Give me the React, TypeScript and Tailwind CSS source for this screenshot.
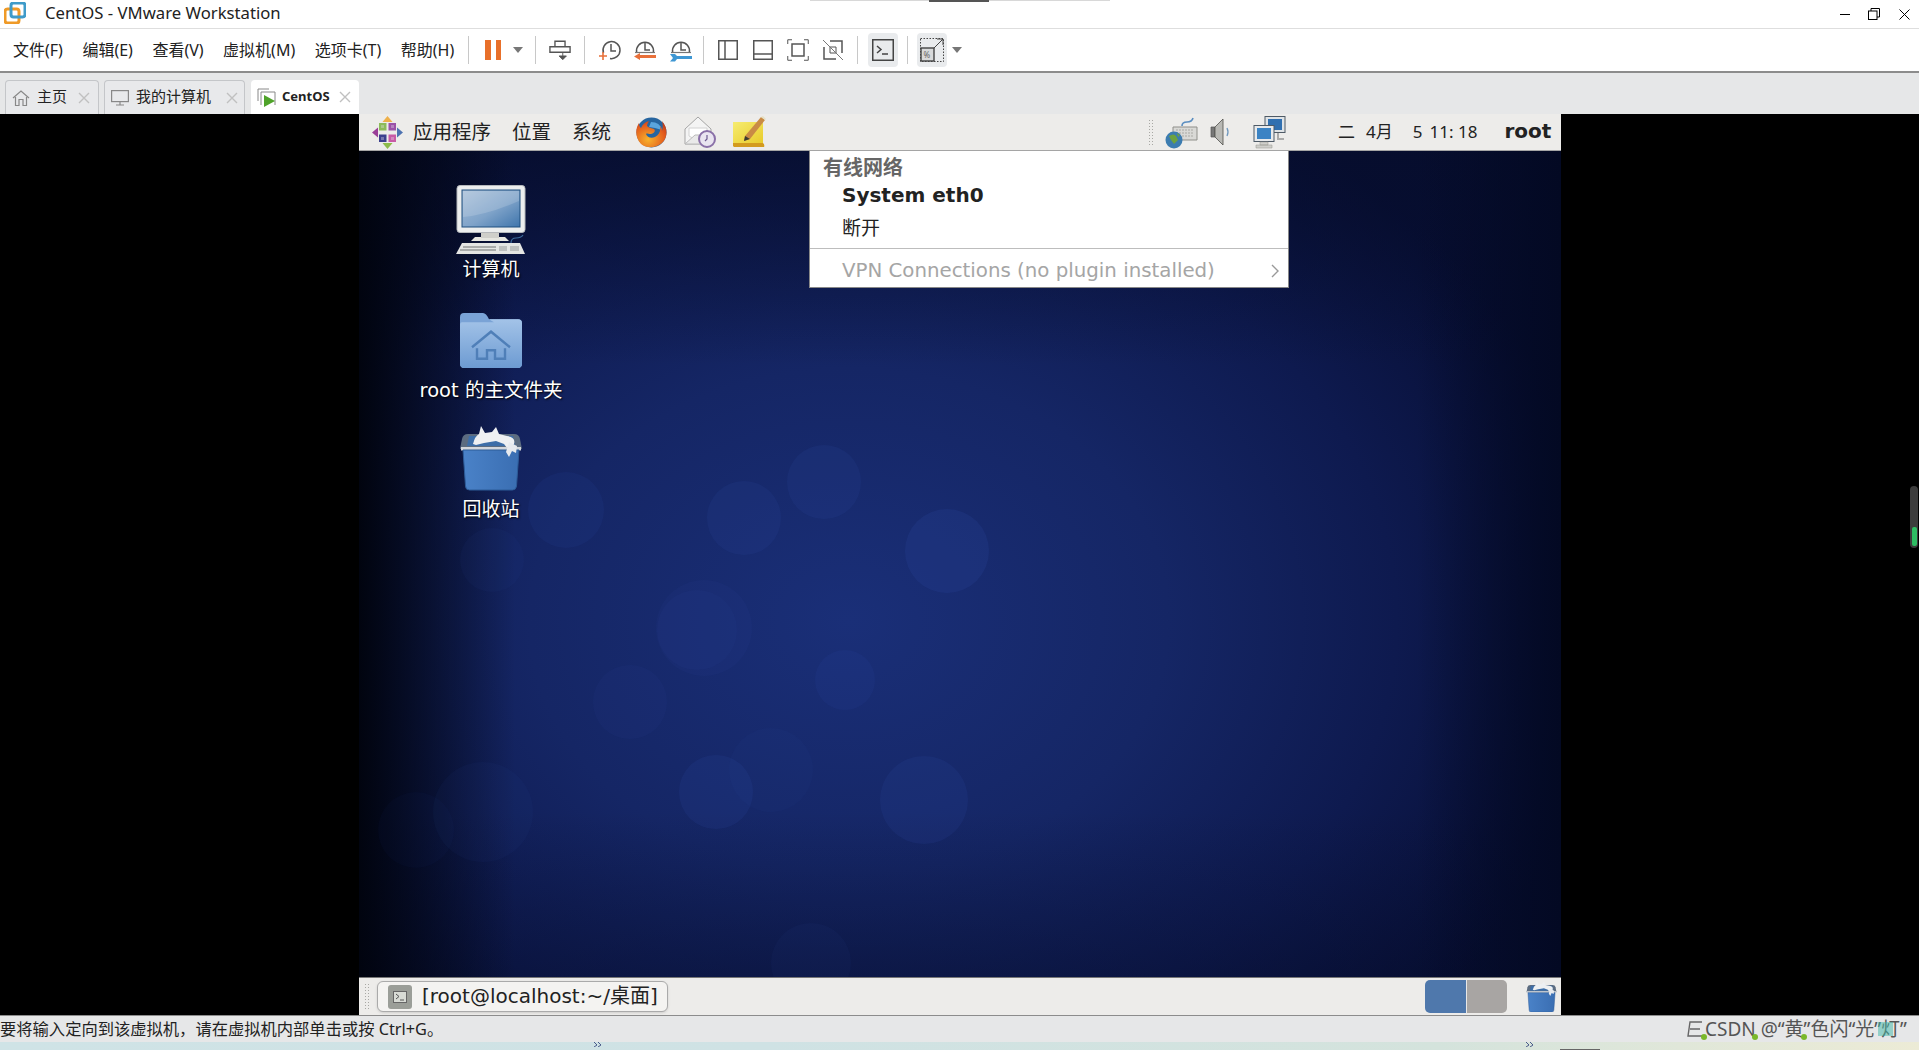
import React from "react";

const cjk = "font-['Noto_Sans','Noto_Sans_CJK_SC',sans-serif]";
const gnome = "font-['DejaVu_Sans','Noto_Sans_CJK_SC',sans-serif]";

function Sep({ className = "" }: { className?: string }) {
  return <div className={"w-px h-[28px] bg-[#c8c8c8] " + className} />;
}

function Caret({ className = "" }: { className?: string }) {
  return (
    <svg width="10" height="6" viewBox="0 0 10 6" className={className}>
      <path d="M0 0h10L5 6z" fill="#777" />
    </svg>
  );
}

function Clock({ variant }: { variant: "plus" | "back" | "wrench" }) {
  return (
    <svg width="24" height="24" viewBox="0 0 24 24" fill="none">
      {variant === "plus" ? (
        <>
          <path d="M5.5 15A8.5 8.5 0 1 1 12 20.5" stroke="#555" strokeWidth="1.5" />
          <path d="M13 6v7h5" stroke="#555" strokeWidth="1.5" />
          <path d="M1 18h8M5 14v8" stroke="#e8703a" strokeWidth="1.6" />
        </>
      ) : (
        <>
          <path d="M3.6 14a8.5 8.5 0 1 1 16.8 0" stroke="#555" strokeWidth="1.5" />
          <path d="M12 5v7h5" stroke="#555" strokeWidth="1.5" />
          <path d="M2 14.5h20" stroke="#777" strokeWidth="1.2" />
          {variant === "back" ? (
            <path d="M1 18.5l6-3.5v2h16v3H7v2z" fill="#e8703a" />
          ) : (
            <path d="M1 16h5l2 2h15v3H8l-2 2.5H1l3-3.5z" fill="#3f97d3" />
          )}
        </>
      )}
    </svg>
  );
}

function Computer() {
  return (
    <svg width="70" height="70" viewBox="0 0 70 70">
      <defs>
        <linearGradient id="scr" x1="0" y1="0" x2="1" y2="1">
          <stop offset="0" stopColor="#a9c0d9" />
          <stop offset="0.55" stopColor="#7fa3c9" />
          <stop offset="1" stopColor="#3f75ac" />
        </linearGradient>
      </defs>
      <rect x="1" y="0.5" width="68" height="47" rx="3" fill="#eceeee" stroke="#b5b8bb" />
      <rect x="6" y="5" width="58" height="37" fill="url(#scr)" stroke="#1f4f7e" />
      <path d="M7 32Q30 30 63 16v-10H7z" fill="#fff" opacity="0.16" />
      <path d="M19 52h30l4 4H15z" fill="#e6e6e0" />
      <rect x="25" y="48" width="18" height="5" fill="#cfcfca" />
      <path d="M6 58h58l5 11H0z" fill="#e4e5e3" />
      <path d="M7 61h33v2H7zM4 64h36v2H4z" fill="#a9abaa" />
      <path d="M43 61h8v5h-8zM54 61h9v5h-9z" fill="#bdbfbe" />
      <path d="M55 58q0-5 5-5t7-3" fill="none" stroke="#3d6b9c" strokeWidth="1.2" />
    </svg>
  );
}

function Folder() {
  return (
    <svg width="62" height="55" viewBox="0 0 62 53" preserveAspectRatio="none">
      <defs>
        <linearGradient id="fld" x1="0" y1="0" x2="0" y2="1">
          <stop offset="0" stopColor="#a3c3e8" />
          <stop offset="1" stopColor="#6d9bd2" />
        </linearGradient>
      </defs>
      <path d="M0 4q0-4 4-4h19q3 0 6 6h29q4 0 4 4v39q0 4-4 4H4q-4 0-4-4z" fill="#7aa3d6" />
      <path d="M0 11q0-2 2-2h32l-5-3h29q4 0 4 4v39q0 4-4 4H4q-4 0-4-4z" fill="url(#fld)" />
      <path d="M12 33l19-15 19 15" fill="none" stroke="#4f7fb8" strokeWidth="2.4" />
      <path d="M17 34v10h10v-8h8v8h10V34" fill="none" stroke="#4f7fb8" strokeWidth="2.4" />
    </svg>
  );
}

function Trash({ id, w = 64, h = 64 }: { id: string; w?: number; h?: number }) {
  return (
    <svg width={w} height={h} viewBox="0 0 64 64">
      <defs>
        <linearGradient id={id} x1="0" y1="0" x2="1" y2="0">
          <stop offset="0" stopColor="#4a82c8" />
          <stop offset="1" stopColor="#3a6eb2" />
        </linearGradient>
      </defs>
      <path d="M3 13q1-5 6-5h46q5 0 6 5l2 10H1z" fill="#5c6c80" />
      <path d="M10 10h44l2 10H8z" fill="#3d6ea8" />
      <path d="M14 18q2-8 6-10l2-8 4 7 7-1 4-5 3 7 8 2q9 1 7 8-3 5-7 4l-3-4-8-3-12 2-8 2z" fill="#eef0f2" />
      <path d="M2 21h60v3.5H2z" fill="#d3d7dc" />
      <path d="M4 24h56l-2.5 36q-.4 4-4 4H10.5q-4 0-4-4z" fill={`url(#${id})`} stroke="#2d5c98" />
      <path d="M47 26l3-10 8 4-1 7-4-2-3 6z" fill="#e7eaee" />
    </svg>
  );
}

function Flower() {
  return (
    <svg width="31" height="33" viewBox="0 0 31 33">
      <path d="M15.5 0l5 6h-10z" fill="#eeb04a" />
      <path d="M31 16.5l-6 5v-10z" fill="#4d72b0" />
      <path d="M15.5 33l-5-6h10z" fill="#8dbb4a" />
      <path d="M0 16.5l6-5v10z" fill="#9a3f98" />
      <rect x="7" y="7" width="7.5" height="7.5" fill="#8dbb5a" />
      <rect x="16.5" y="7" width="7.5" height="7.5" fill="#9b52a8" />
      <rect x="7" y="18.5" width="7.5" height="7.5" fill="#3c3f8e" />
      <rect x="16.5" y="18.5" width="7.5" height="7.5" fill="#c85aa6" />
      <path d="M9 9h3v3H9zM19 9h3v3h-3zM9 21h3v3H9zM19 21h3v3h-3z" fill="#e6e2ea" opacity="0.35" />
    </svg>
  );
}

function Firefox() {
  return (
    <svg width="31" height="31" viewBox="0 0 31 31">
      <defs>
        <radialGradient id="ffx" cx="0.4" cy="0.7" r="0.8">
          <stop offset="0" stopColor="#f8b32c" />
          <stop offset="0.7" stopColor="#e2591c" />
          <stop offset="1" stopColor="#b8381a" />
        </radialGradient>
      </defs>
      <circle cx="15.5" cy="15.5" r="15" fill="#27659f" />
      <path d="M15 5q9 0 11 8l-7-2-6-1z" fill="#5ba5dd" />
      <path d="M26 4c6 7 6 16 0 22-6 5-15 6-21 1C-1 21-1 12 3 6c0 3 1 4 2 5 1-3 4-6 8-7-1 2-2 3-2 5 2 2 5 2 7 3 2 2 0 4-3 5-3 0-4-1-5 0 1 3 5 5 9 3 4-2 6-6 5-11 1 1 2 3 2 5 1-3 1-7 0-10z" fill="url(#ffx)" />
    </svg>
  );
}

function Mail() {
  return (
    <svg width="32" height="32" viewBox="0 0 32 32">
      <path d="M1 13L14 1l13 12v15H1z" fill="#f4f4f4" stroke="#a5a5a5" />
      <path d="M5 12h18v8l-9 5-9-5z" fill="#fff" stroke="#d2d2d2" />
      <path d="M1 28l10-9h6l10 9z" fill="#e9e9e9" stroke="#bbb" />
      <circle cx="23" cy="23" r="8" fill="#e9e4f0" stroke="#8a70a8" strokeWidth="2" />
      <path d="M23 19v4l-2 2" stroke="#6d5a90" strokeWidth="1.2" fill="none" />
    </svg>
  );
}

function Note() {
  return (
    <svg width="33" height="32" viewBox="0 0 33 32">
      <defs>
        <linearGradient id="nte" x1="0" y1="0" x2="1" y2="1">
          <stop offset="0" stopColor="#f6ec70" />
          <stop offset="1" stopColor="#e8cb2a" />
        </linearGradient>
      </defs>
      <path d="M0 6h30v22H0z" fill="url(#nte)" />
      <path d="M0 27h30q2 2 1 4H1q-2-2-1-4z" fill="#d39b1e" />
      <path d="M12 20L28 1l4 3-15 19-6 2z" fill="#c98b45" />
      <path d="M28 1l2-1 3 3-1 1z" fill="#e5e0c5" />
      <path d="M12 20l-1 5 6-2z" fill="#3b3b30" />
    </svg>
  );
}

function KeyboardGlobe() {
  return (
    <svg width="33" height="33" viewBox="0 0 33 33">
      <path d="M8 11h24v13H8z" fill="#d9d9d6" stroke="#8f8f8a" />
      <path d="M11 14h18M11 17h18M11 20h18" stroke="#a9a9a4" strokeDasharray="2 1" />
      <path d="M17 10q0-4 5-4t6-4" fill="none" stroke="#5b8ec0" strokeWidth="1.6" />
      <circle cx="9" cy="24" r="8.5" fill="#3c7cb0" />
      <path d="M4 20q5-3 7 0l2 4-4 4-3-4zM12 17l3 2-2 2z" fill="#6da23f" />
    </svg>
  );
}

function Speaker() {
  return (
    <svg width="23" height="32" viewBox="0 0 23 32">
      <path d="M1 11h4v10H1z" fill="#777" stroke="#555" strokeWidth="0.7" />
      <path d="M5 11l8-8v26l-8-8z" fill="#b9b9b5" stroke="#4e4e4a" strokeWidth="0.8" />
      <path d="M17 12q2 4 0 8" stroke="#6f97bd" strokeWidth="1.3" fill="none" />
    </svg>
  );
}

function NetIcon() {
  return (
    <svg width="33" height="33" viewBox="0 0 33 33">
      <rect x="12" y="0.5" width="20" height="16" fill="#dfe3e6" stroke="#4e5a66" />
      <rect x="15" y="3" width="14" height="11" fill="#2f6fb0" />
      <rect x="1" y="9.5" width="20" height="16" fill="#e8eaec" stroke="#4e5a66" />
      <rect x="4" y="12" width="14" height="11" fill="#3b83c4" />
      <path d="M7 26h8v3H7zM3 29h16v3H3z" fill="#cfcfcb" stroke="#95958f" strokeWidth="0.5" />
      <path d="M25 17v6h6" fill="none" stroke="#aaa" strokeWidth="2" />
    </svg>
  );
}

function Grip() {
  return (
    <div className="grid grid-cols-[1px_1px] gap-[2px]">
      {Array.from({ length: 18 }).map((_, i) => (
        <div key={i} className="w-px h-px bg-[#a8a8a4]" />
      ))}
    </div>
  );
}

function Tab({ label, icon, active, width, ml, closeMl, bold }: { label: string; icon: React.ReactNode; active?: boolean; width: string; ml: string; closeMl: string; bold?: boolean }) {
  return (
    <div className={`${width} ${ml} h-[34px] flex items-center pl-[6px] rounded-t-[4px] ${active ? "bg-white" : "bg-[#e8e9eb] border border-b-0 border-[#c4c6c9]"}`}>
      {icon}
      <span className={`${bold ? "text-[13px] font-bold ml-[6px]" : "text-[15px] ml-[7px] mb-[2px]"} text-[#222] whitespace-nowrap`}>{label}</span>
      <svg width="12" height="12" viewBox="0 0 12 12" className={closeMl}>
        <path d="M1 1l10 10M11 1L1 11" stroke="#c0c0c0" strokeWidth="1.4" />
      </svg>
    </div>
  );
}

function Chevrons({ left }: { left: string }) {
  return (
    <svg width="8" height="5" viewBox="0 0 8 5" fill="none" className={`absolute top-0 ${left}`}>
      <path d="M0 0l3 3-3 2M4 0l3 3-3 2" stroke="#4a5a8a" />
    </svg>
  );
}

const bokeh = [
  [566, 510, 38, 0.1], [492, 560, 32, 0.06], [824, 482, 37, 0.12], [744, 518, 37, 0.12], [947, 551, 42, 0.16],
  [704, 628, 48, 0.08], [697, 630, 40, 0.08], [845, 680, 30, 0.1], [630, 702, 37, 0.08], [483, 812, 50, 0.06],
  [416, 830, 38, 0.04], [716, 792, 37, 0.14], [924, 800, 44, 0.14], [771, 770, 42, 0.06], [811, 963, 40, 0.06],
];

export default function App() {
  return (
    <div className={`w-[1919px] h-[1050px] overflow-hidden flex flex-col bg-white relative ${cjk}`}>
      <div className="absolute top-0 left-[810px] w-[300px] h-[1px] bg-[#d8d8d8]" />
      <div className="absolute top-0 left-[929px] w-[60px] h-[2px] bg-[#555]" />

      {/* title bar */}
      <div className="h-[29px] shrink-0 flex items-center border-b border-[#dedede] bg-white">
        <svg width="22" height="22" viewBox="0 0 22 22" className="ml-[4px] mb-[2px]">
          <rect x="1" y="7" width="14" height="14" rx="2.5" fill="none" stroke="#ef9a27" strokeWidth="3" />
          <rect x="7" y="1" width="14" height="14" rx="2.5" fill="none" stroke="#3f9bc9" strokeWidth="3" />
        </svg>
        <span className="ml-[19px] mb-[1px] text-[16.7px] text-[#222] leading-none whitespace-nowrap">CentOS - VMware Workstation</span>
        <div className="ml-auto flex items-center mr-[9px]">
          <div className="w-[10px] h-px bg-black" />
          <svg width="12" height="12" viewBox="0 0 12 12" className="ml-[18px]">
            <path d="M3 3V.5h8.5V9H9" fill="none" stroke="#000" />
            <rect x="0.5" y="3" width="8.5" height="8.5" fill="none" stroke="#000" />
          </svg>
          <svg width="11" height="11" viewBox="0 0 11 11" className="ml-[19px]">
            <path d="M.5.5l10 10M10.5.5l-10 10" stroke="#000" />
          </svg>
        </div>
      </div>

      {/* toolbar */}
      <div className="h-[44px] shrink-0 flex items-center border-b-2 border-[#8c8c8c] bg-white text-[16px] text-[#222]">
        <div className="flex gap-[19.5px] ml-[13px] whitespace-nowrap">
          <span>文件(F)</span>
          <span>编辑(E)</span>
          <span>查看(V)</span>
          <span>虚拟机(M)</span>
          <span>选项卡(T)</span>
          <span>帮助(H)</span>
        </div>
        <Sep className="ml-[14px]" />
        <div className="ml-[16px] flex gap-[5px]">
          <div className="w-[5.5px] h-[20px] bg-[#e8702a]" />
          <div className="w-[5.5px] h-[20px] bg-[#e8702a]" />
        </div>
        <Caret className="ml-[12px]" />
        <Sep className="ml-[12px]" />
        <svg width="22" height="22" viewBox="0 0 24 24" fill="none" className="ml-[13px]">
          <path d="M6.5 2.5h11v6h-11zM1 8.5h22v6H1z" stroke="#555" strokeWidth="1.5" />
          <path d="M15 14.5v4M11 18.5h8l-4 4z" stroke="#555" fill="#555" />
        </svg>
        <Sep className="ml-[13px]" />
        <div className="ml-[13px]"><Clock variant="plus" /></div>
        <div className="ml-[11px]"><Clock variant="back" /></div>
        <div className="ml-[12px]"><Clock variant="wrench" /></div>
        <Sep className="ml-[10px]" />
        <svg width="20" height="20" viewBox="0 0 20 20" fill="none" className="ml-[14px]">
          <rect x="0.75" y="0.75" width="18.5" height="18.5" stroke="#555" strokeWidth="1.5" />
          <path d="M7 1v18" stroke="#555" strokeWidth="1.5" />
        </svg>
        <svg width="20" height="20" viewBox="0 0 20 20" fill="none" className="ml-[15px]">
          <rect x="0.75" y="0.75" width="18.5" height="18.5" stroke="#555" strokeWidth="1.5" />
          <path d="M1 14h18" stroke="#555" strokeWidth="1.5" />
        </svg>
        <svg width="22" height="22" viewBox="0 0 22 22" fill="none" className="ml-[14px]">
          <path d="M.75 5V.75H5M17 .75h4.25V5M21.25 17v4.25H17M5 21.25H.75V17" stroke="#555" />
          <rect x="5" y="5" width="12" height="12" stroke="#555" strokeWidth="1.5" />
        </svg>
        <svg width="22" height="22" viewBox="0 0 22 22" fill="none" className="ml-[13px]">
          <path d="M8 2h12v12M14 20H2V8" stroke="#555" strokeWidth="1.5" />
          <path d="M8 8h6v6H8z" stroke="#555" />
          <path d="M1 1l20 20" stroke="#777" />
        </svg>
        <Sep className="ml-[13px]" />
        <div className="ml-[10px] w-[30px] h-[34px] rounded-[4px] bg-[#e9ebed] flex items-center justify-center">
          <svg width="22" height="22" viewBox="0 0 22 22" fill="none">
            <rect x="0.75" y="0.75" width="20.5" height="20.5" stroke="#444" strokeWidth="1.5" />
            <path d="M5 7l4 3.5L5 14M10 15h6" stroke="#444" strokeWidth="1.5" />
          </svg>
        </div>
        <Sep className="ml-[9px]" />
        <div className="ml-[9px] w-[30px] h-[34px] rounded-[4px] bg-[#e9ebed] flex items-center justify-center">
          <svg width="24" height="24" viewBox="0 0 24 24" fill="none">
            <rect x="0.5" y="0.5" width="23" height="23" stroke="#444" strokeDasharray="1.5 1.5" />
            <rect x="1" y="10" width="13" height="13" stroke="#444" strokeWidth="1.4" fill="#d8d9da" />
            <path d="M14 10l9-9M17 1h6v6" stroke="#444" />
            <text x="3.5" y="20" fontSize="8" fill="#666">%</text>
          </svg>
        </div>
        <Caret className="ml-[5px]" />
      </div>

      {/* tabs */}
      <div className="h-[41px] shrink-0 bg-[#e6e7e8] flex items-end">
        <Tab
          label="主页" width="w-[94px]" ml="ml-[5px]" closeMl="ml-[11px]"
          icon={
            <svg width="18" height="18" viewBox="0 0 18 18" fill="none">
              <path d="M1 9l8-7 8 7M3.5 8v8.5H7v-6h4v6h3.5V8" stroke="#888" strokeWidth="1.2" />
            </svg>
          }
        />
        <Tab
          label="我的计算机" width="w-[141px]" ml="ml-[5px]" closeMl="ml-[15px]"
          icon={
            <svg width="18" height="16" viewBox="0 0 18 16" fill="none">
              <rect x="0.6" y="0.6" width="16.8" height="11" stroke="#888" strokeWidth="1.2" />
              <path d="M9 12v3M5 15h8" stroke="#888" strokeWidth="1.2" />
            </svg>
          }
        />
        <Tab
          label="CentOS" width="w-[108px]" ml="ml-[6px]" closeMl="ml-[9px]" active bold
          icon={
            <svg width="19" height="19" viewBox="0 0 19 19" fill="none">
              <path d="M1 13V1h11" stroke="#888" />
              <path d="M4 17V4h14v13" stroke="#888" />
              <path d="M7 7l11 6-11 6z" fill="#4fa32a" />
            </svg>
          }
        />
      </div>

      {/* VM view */}
      <div className="h-[901px] shrink-0 bg-black flex justify-start relative">
        <div className="ml-[359px] w-[1202px] h-full flex flex-col relative">
          {/* gnome top panel */}
          <div className={`h-[37px] shrink-0 flex items-center bg-[#edecea] border-b border-[#a5a5a5] text-[19.5px] text-[#222] ${gnome}`}>
            <div className="ml-[13px]"><Flower /></div>
            <span className={`ml-[10px] ${cjk}`}>应用程序</span>
            <span className={`ml-[21px] ${cjk}`}>位置</span>
            <span className={`ml-[21px] ${cjk}`}>系统</span>
            <div className="ml-[25px]"><Firefox /></div>
            <div className="ml-[17px]"><Mail /></div>
            <div className="ml-[17px]"><Note /></div>
            <div className="ml-[383px]"><Grip /></div>
            <div className="ml-[12px]"><KeyboardGlobe /></div>
            <div className="ml-[12px]"><Speaker /></div>
            <div className="ml-[20px]"><NetIcon /></div>
            <div className={`ml-[52px] flex whitespace-pre text-[17px] ${cjk}`}>
              <span>二</span>
              <span className="ml-[11px]">4月</span>
              <span className="ml-[20px]">5</span>
              <span className="ml-[7px]">11: 18</span>
            </div>
            <span className="ml-[27px] font-bold text-[20px] mb-[2px]">root</span>
          </div>

          {/* desktop */}
          <div className="flex-1 relative overflow-hidden bg-[linear-gradient(90deg,#01040f_0%,rgba(1,4,15,0)_13%,rgba(1,4,15,0)_88%,#030923_100%),linear-gradient(180deg,rgba(6,13,44,0.75)_0%,rgba(6,13,44,0)_26%,rgba(6,13,44,0)_80%,rgba(6,13,44,0.4)_100%),radial-gradient(ellipse_760px_600px_at_490px_470px,#1a2f78_0%,#152665_42%,#0e1a4f_72%,#070e33_100%)]">
            <svg className="absolute inset-0 w-full h-full" viewBox="0 0 1202 826">
              {bokeh.map(([x, y, r, o], i) => (
                <circle key={i} cx={x - 359} cy={y - 151} r={r} fill="#2f50ac" opacity={o} />
              ))}
            </svg>
            <div className={`relative w-[264px] flex flex-col items-center text-white text-[19px] leading-[26px] ${gnome}`}>
              <div className="mt-[34px]"><Computer /></div>
              <span className="mt-[1px] [text-shadow:1px_1px_2px_#000]">计算机</span>
              <div className="mt-[31px]"><Folder /></div>
              <span className="mt-[10px] text-[19.5px] whitespace-nowrap [text-shadow:1px_1px_2px_#000]">root 的主文件夹</span>
              <div className="mt-[21px]"><Trash id="trashBig" h={66} /></div>
              <span className="mt-[5px] [text-shadow:1px_1px_2px_#000]">回收站</span>
            </div>
          </div>

          {/* gnome bottom panel */}
          <div className={`h-[38px] shrink-0 flex items-center bg-[#edecea] border-t border-[#777] ${gnome}`}>
            <div className="ml-[6px]"><Grip /></div>
            <div className="ml-[8px] w-[291px] h-[31px] rounded-[6px] border border-[#aaa] bg-[#f4f3f1] flex items-center shadow-sm">
              <div className="ml-[10px] w-[24px] h-[24px] rounded-[3px] bg-[#9b9e98] flex items-center justify-center">
                <svg width="14" height="12" viewBox="0 0 14 12" fill="none">
                  <rect x="0.5" y="0.5" width="13" height="11" fill="#d8dbd5" stroke="#666" />
                  <path d="M3 3l3 2.5L3 8M7 9h4" stroke="#555" />
                </svg>
              </div>
              <span className="ml-[10px] text-[20px] text-[#222] whitespace-nowrap mb-[2px]">[root@localhost:~/桌面]</span>
            </div>
            <div className="ml-auto flex h-[33px] w-[82px] rounded-[5px] overflow-hidden">
              <div className="w-[41px] bg-[#4f78ac]" />
              <div className="w-px bg-[#e8e8e8]" />
              <div className="flex-1 bg-[#a8a5a3]" />
            </div>
            <div className="ml-[19px] mr-[4px]"><Trash id="trashSmall" w={31} h={31} /></div>
          </div>

          {/* network menu */}
          <div className={`absolute left-[450px] top-[37px] w-[480px] h-[137px] bg-white border border-[#888] border-t-0 text-[20px] ${gnome}`}>
            <div className={`pl-[13px] pt-[4px] h-[29px] leading-[26px] text-[20px] font-bold text-[#666] ${cjk}`}>有线网络</div>
            <div className="pl-[32px] h-[30px] leading-[30px] font-bold text-[#222]">System eth0</div>
            <div className={`pl-[32px] h-[38px] leading-[36px] text-[19px] text-[#222] ${cjk}`}>断开</div>
            <div className="h-px bg-[#bdbdbd]" />
            <div className="pl-[32px] pt-[5px] h-[38px] flex items-center text-[19.8px] text-[#a5a5a5]">
              <span className="whitespace-nowrap">VPN Connections (no plugin installed)</span>
              <svg width="9" height="14" viewBox="0 0 9 14" fill="none" className="ml-auto mr-[8px]">
                <path d="M1 1l6 6-6 6" stroke="#999" strokeWidth="1.4" />
              </svg>
            </div>
          </div>
        </div>

        {/* side scrollbar */}
        <div className="absolute left-[1910px] top-[372px] w-[8px] h-[62px] rounded-[4px] bg-[#3c3c3c] flex flex-col justify-end pb-[2px] items-center">
          <div className="w-[5px] h-[19px] bg-[#2ebd63] rounded-[2px]" />
        </div>
      </div>

      {/* status bar */}
      <div className="h-[27px] shrink-0 bg-[#e6e7e8] border-t border-[#8c8c8c] flex items-center text-[16.3px] text-[#222] relative whitespace-nowrap">
        <span>要将输入定向到该虚拟机，请在虚拟机内部单击或按 Ctrl+G。</span>
        <div className="absolute left-[1687px] top-0 w-[218px] h-[26px] flex items-center text-[#555] text-[19px] leading-none">
          <svg width="16" height="16" viewBox="0 0 16 16" fill="none" className="shrink-0">
            <path d="M15 1H3L1 15h14M3 8h10" stroke="#666" strokeWidth="1.4" />
          </svg>
          <span className="ml-[2px] whitespace-nowrap">CSDN @“黄”色闪“光”灯”</span>
          <div className="absolute left-[14px] top-[18px] w-[6px] h-[6px] rounded-full bg-[#7ab82a]" />
          <div className="absolute left-[65px] top-[18px] w-[6px] h-[6px] rounded-full bg-[#7ab82a]" />
          <div className="absolute left-[114px] top-[18px] w-[6px] h-[6px] rounded-full bg-[#7ab82a]" />
          <div className="absolute left-[191px] top-[6px] w-[15px] h-[14px] bg-[#3fb7a8] opacity-50" />
        </div>
      </div>

      {/* strip beneath the window */}
      <div className="h-[8px] shrink-0 relative bg-[linear-gradient(90deg,#cfe3e6_0%,#cfe2e4_40%,#d4e3dc_75%,#ecebd6_100%)] overflow-hidden">
        <Chevrons left="left-[594px]" />
        <Chevrons left="left-[1526px]" />
        <div className="absolute left-[1560px] top-[7px] w-[40px] h-px bg-[#666]" />
      </div>
    </div>
  );
}
